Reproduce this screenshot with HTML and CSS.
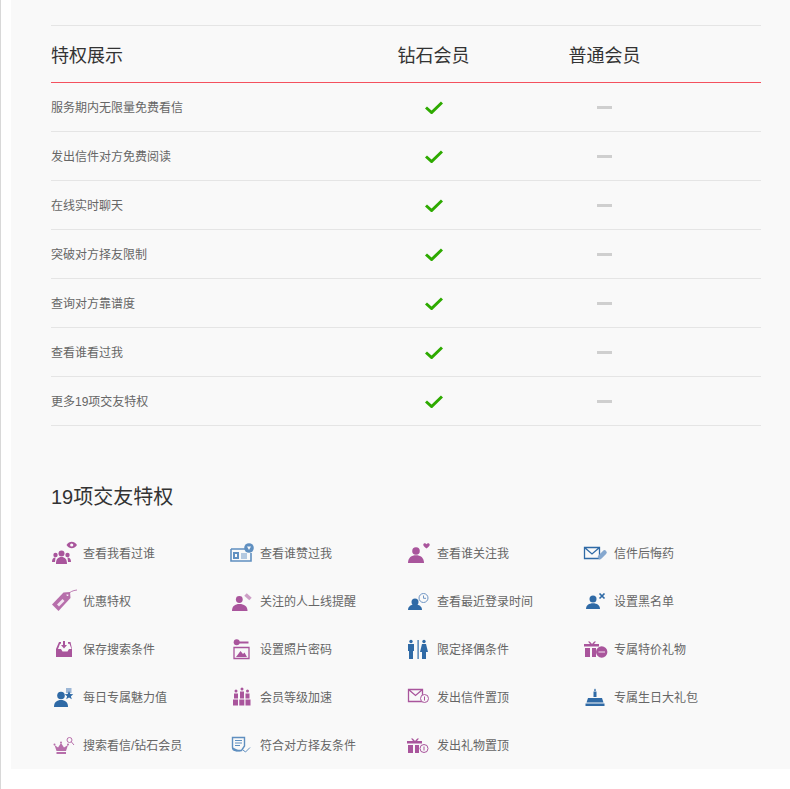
FILE: index.html
```html
<!DOCTYPE html>
<html lang="zh">
<head>
<meta charset="utf-8">
<title>特权展示</title>
<link rel="stylesheet" href="styles.css">
</head>
<body>
<svg class="defs" width="0" height="0" aria-hidden="true">
  <symbol id="check" viewBox="0 0 18 13"><path d="M1 6.500 6.600 11.500 17 1.500" fill="none" stroke="currentColor" stroke-width="3"/></symbol>
</svg>
<main class="panel">
  <section class="compare">
    <div class="row head"><div>特权展示</div><div class="c">钻石会员</div><div class="c">普通会员</div></div>
    <div class="row"><div class="name">服务期内无限量免费看信</div><div class="c"><svg class="check"><use href="#check"/></svg></div><div class="c"><i class="dash"></i></div></div>
    <div class="row"><div class="name">发出信件对方免费阅读</div><div class="c"><svg class="check"><use href="#check"/></svg></div><div class="c"><i class="dash"></i></div></div>
    <div class="row"><div class="name">在线实时聊天</div><div class="c"><svg class="check"><use href="#check"/></svg></div><div class="c"><i class="dash"></i></div></div>
    <div class="row"><div class="name">突破对方择友限制</div><div class="c"><svg class="check"><use href="#check"/></svg></div><div class="c"><i class="dash"></i></div></div>
    <div class="row"><div class="name">查询对方靠谱度</div><div class="c"><svg class="check"><use href="#check"/></svg></div><div class="c"><i class="dash"></i></div></div>
    <div class="row"><div class="name">查看谁看过我</div><div class="c"><svg class="check"><use href="#check"/></svg></div><div class="c"><i class="dash"></i></div></div>
    <div class="row"><div class="name">更多19项交友特权</div><div class="c"><svg class="check"><use href="#check"/></svg></div><div class="c"><i class="dash"></i></div></div>
  </section>
  <h2 class="title">19项交友特权</h2>
  <section class="grid">
    <div class="item"><svg class="ico p" viewBox="0 0 32 32"><path d="M15.500 8c1.500-2.200 3.300-3.200 5.200-3.200S24.400 5.800 26 8c-1.600 2.200-3.400 3.200-5.300 3.200S17 10.200 15.500 8Z"/><circle cx="20.700" cy="8" r="1.600" fill="#f9f9f9"/><circle cx="10.500" cy="16.500" r="3"/><circle cx="4.500" cy="18" r="2.200"/><circle cx="16.500" cy="18" r="2.200"/><path d="M5 27c0-5 2-7 5.500-7S16 22 16 27ZM1 25c0-3 1-4.500 3.500-4.500L4 25ZM20 25c0-3-1-4.500-3.500-4.500L17 25Z"/></svg><span>查看我看过谁</span></div>
    <div class="item"><svg class="ico b2" viewBox="0 0 32 32"><path d="M3 12h15M3 12v12h20v-8" fill="none" stroke="currentColor" stroke-width="1.600"/><path d="M5 22v-7h6v7ZM7 17h2v3H7Z" fill-rule="evenodd"/><path d="M13 16h6v6h-6Z" opacity=".45"/><circle cx="21" cy="11" r="4.800"/><path d="M19 9.500h4l-2 3.500Z" fill="#f9f9f9"/></svg><span>查看谁赞过我</span></div>
    <div class="item"><svg class="ico p" viewBox="0 0 32 32"><circle cx="11" cy="14" r="3.800"/><path d="M3 26c0-5.500 3.500-7.800 8-7.800s8 2.300 8 7.800Z"/><path d="M21.500 11.500c-2.500-1.800-3.200-2.800-3.200-3.800 0-1.700 2.300-2 3.200-.5.900-1.500 3.200-1.200 3.200.5 0 1-.7 2-3.200 3.800Z"/></svg><span>查看谁关注我</span></div>
    <div class="item"><svg class="ico b" viewBox="0 0 32 32"><path d="M2.500 10.500h15v11h-15ZM2.500 10.500l7.500 6.500 7.500-6.500" fill="none" stroke="currentColor" stroke-width="1.300"/><path d="M18 20 22.500 15.500" fill="none" stroke="#86a8cf" stroke-width="4.500" stroke-linecap="round"/></svg><span>信件后悔药</span></div>

    <div class="item"><svg class="ico p2" viewBox="0 0 32 32"><path d="M1 19.500 12.500 7.500 19 7l.5 6L7.500 26Z"/><path d="M6 19.500 11.500 14l2 2L8 21.500Z" fill="#f3e5f1"/><circle cx="16.500" cy="10" r="1" fill="#f9f9f9"/><path d="M16.500 10c2-3 5-4.500 9.500-5" fill="none" stroke="currentColor" stroke-width=".9"/></svg><span>优惠特权</span></div>
    <div class="item"><svg class="ico p" viewBox="0 0 32 32"><circle cx="11.300" cy="14.500" r="3.400"/><path d="M4 26c0-5 3-7 7.500-7s8 2 8 7Z"/><path d="M17.500 9.500 22.500 14" fill="none" stroke="currentColor" stroke-width="3.600" opacity=".55"/></svg><span>关注的人上线提醒</span></div>
    <div class="item"><svg class="ico b" viewBox="0 0 32 32"><circle cx="10" cy="17" r="3.500"/><path d="M3 25c0-3.700 3-5.500 7-5.500s7 1.800 7 5.500Z"/><circle cx="18.500" cy="13" r="4.500" fill="none" stroke="#6e95c4" stroke-width="1"/><path d="M18.500 10.500V13.300H21" fill="none" stroke="#6e95c4"/></svg><span>查看最近登录时间</span></div>
    <div class="item"><svg class="ico b" viewBox="0 0 32 32"><circle cx="11" cy="14" r="3.500"/><path d="M4 24c0-3.700 3-5.800 7-5.800s7 2.100 7 5.800Z"/><path d="M17.500 8.500l5 5M22.500 8.500l-5 5" stroke="currentColor" stroke-width="1.700" fill="none"/></svg><span>设置黑名单</span></div>

    <div class="item"><svg class="ico p" viewBox="0 0 32 32"><path d="M5 16 8 9h2v1.700H9L7 16h3l1.500 2.500h5L18 16h2.500L18.500 10.700H17V9h2.500L21 16v8H5Z"/><path d="M12 8h2v4h2l-3 3.500L10 12h2Z"/></svg><span>保存搜索条件</span></div>
    <div class="item"><svg class="ico p" viewBox="0 0 32 32"><circle cx="8.700" cy="9.300" r="3"/><path d="M11 8.500h9.500v2H11Z"/><path d="M6 14.500h15v11H6Z" fill="none" stroke="currentColor" stroke-width="1.300"/><path d="M8 24l4.500-6 2.500 3 1.500-1.500L19 24Z"/></svg><span>设置照片密码</span></div>
    <div class="item"><svg class="ico b" viewBox="0 0 32 32"><circle cx="6" cy="8.500" r="1.700"/><path d="M3 11h6v7H8v8H4v-8H3Z"/><path d="M12.500 7h1.200v19h-1.200Z"/><circle cx="19" cy="8.500" r="1.700"/><path d="M17 11h4l2 8h-2v7h-4v-7h-2Z"/></svg><span>限定择偶条件</span></div>
    <div class="item"><svg class="ico p" viewBox="0 0 32 32"><path d="M2 11h6L6 8.500h1.700L10 11l2.300-2.500H14L12 11h5v2.500H2ZM3 15h5v9H3ZM10 15h4v9h-4Z"/><circle cx="19.700" cy="19" r="5.700"/><path d="M16.500 18.500h6.500v1h-6.500Z" fill="#f3e5f1"/></svg><span>专属特价礼物</span></div>

    <div class="item"><svg class="ico b" viewBox="0 0 32 32"><circle cx="10" cy="14.500" r="3.800"/><path d="M3 26c0-5 3-7 7-7s7 2 7 7Z"/><path d="M15 7h5.500v5h-5.500Z" fill="#9db7d6"/><path d="M18 10l1.300 3 3 .2-2.400 2 .9 3-2.800-1.700-2.800 1.700.9-3-2.400-2 3-.2Z"/></svg><span>每日专属魅力值</span></div>
    <div class="item"><svg class="ico p" viewBox="0 0 32 32"><circle cx="8" cy="10" r="1.500"/><circle cx="14" cy="8" r="1.500"/><circle cx="19.500" cy="10" r="1.500"/><path d="M6 12.500h4v5H6ZM12 10.500h4v7h-4ZM17.500 12.500h4v5h-4ZM5 18.500h5v6H5ZM11.300 18.500h5v6h-5ZM17.500 18.500h5v6h-5Z"/></svg><span>会员等级加速</span></div>
    <div class="item"><svg class="ico p" viewBox="0 0 32 32"><path d="M3.500 8.500h14v12h-14ZM3.500 8.500l7 6 7-6" fill="none" stroke="currentColor" stroke-width="1.300"/><circle cx="19.500" cy="17.500" r="4" fill="#f9f9f9" stroke="currentColor"/><path d="M19 15.500h1v4h-1Z"/></svg><span>发出信件置顶</span></div>
    <div class="item"><svg class="ico b" viewBox="0 0 32 32"><path d="M13 7.500c1 1.200 1 2 .5 2.500h-1c-.5-.5-.5-1.300.5-2.500ZM11.500 10.500h3V16h-3Z"/><path d="M6 17h14l1.500 4.500H4.500ZM3.500 22.500h19V25h-19Z"/></svg><span>专属生日大礼包</span></div>

    <div class="item"><svg class="ico p2" viewBox="0 0 32 32"><path d="M3.500 16 7 18.500 10 14l3 4.500 4-2.500-2 6H5.500ZM5.500 23h9.500v2H5.500Z"/><circle cx="3.500" cy="15.500" r="1"/><circle cx="10" cy="13.500" r="1"/><circle cx="17" cy="15.500" r="1"/><circle cx="18.500" cy="11" r="2.500" fill="none" stroke="currentColor"/><path d="M20.300 12.800 23 16" stroke="currentColor" fill="none"/></svg><span>搜索看信/钻石会员</span></div>
    <div class="item"><svg class="ico b2" viewBox="0 0 32 32"><path d="M4.500 8.500h12V17l-3 4.500H8c-2 0-3.500-1-3.500-3Z" fill="none" stroke="currentColor" stroke-width="1.400"/><path d="M7 11.500h7M7 14h7M7 16.500h5" stroke="currentColor" fill="none"/><path d="M5 20l3 2.500h5l-8-4Z"/><path d="M15 21l2.500 2L22 18.500" fill="none" stroke="currentColor" stroke-width="1"/></svg><span>符合对方择友条件</span></div>
    <div class="item"><svg class="ico p" viewBox="0 0 32 32"><path d="M2 12h6L6 9.500h1.700L10 12l2.300-2.500H14L12 12h5v2.500H2ZM3 16h5v8H3ZM10 16h4v8h-4Z"/><circle cx="19" cy="19.500" r="4" fill="#f9f9f9" stroke="currentColor"/><path d="M18.500 17.500h1v4h-1Z"/></svg><span>发出礼物置顶</span></div>
  </section>
</main>
</body>
</html>
```
FILE: styles.css
```css
html, body { margin: 0; padding: 0; background: #fff; }
body {
  font-family: "Liberation Sans", "Noto Sans CJK SC", sans-serif;
  height: 789px;
  overflow: hidden;
  border-left: 1px solid #d8d8d8;
  box-sizing: border-box;
  padding-left: 10px;
}
.defs { position: absolute; }
.panel {
  background: #f9f9f9;
  height: 769px;
  padding: 25px 29px 0 40px;
  box-sizing: border-box;
}
.compare { border-top: 1px solid #e5e5e5; }
.row {
  display: grid;
  grid-template-columns: 297px 171px 171px 71px;
  align-items: center;
  height: 48px;
  border-bottom: 1px solid #e5e5e5;
  font-size: 12px;
  color: #666;
}
.head {
  height: 56px;
  border-bottom-color: #f4515f;
  font-size: 18px;
  color: #333;
}
.name { padding-bottom: 2px; }
.c { display: flex; justify-content: center; align-items: center; }
.check { width: 18px; height: 13px; color: #2eaa00; }
.dash { display: block; width: 15px; height: 3px; background: #cfcfcf; }
.title {
  margin: 58px 0 0;
  font-size: 20px;
  line-height: 26px;
  font-weight: 400;
  color: #333;
}
.grid {
  display: grid;
  grid-template-columns: repeat(4, 177px);
  grid-auto-rows: 48px;
  margin-top: 19px;
}
.item {
  display: flex;
  align-items: center;
  font-size: 12px;
  color: #666;
}
.item span { padding-bottom: 2px; }
.ico { width: 32px; height: 32px; flex: none; fill: currentColor; }
.p { color: #a9559c; }
.p2 { color: #b76fab; }
.b { color: #2f6aa6; }
.b2 { color: #5f8fc0; }
```
